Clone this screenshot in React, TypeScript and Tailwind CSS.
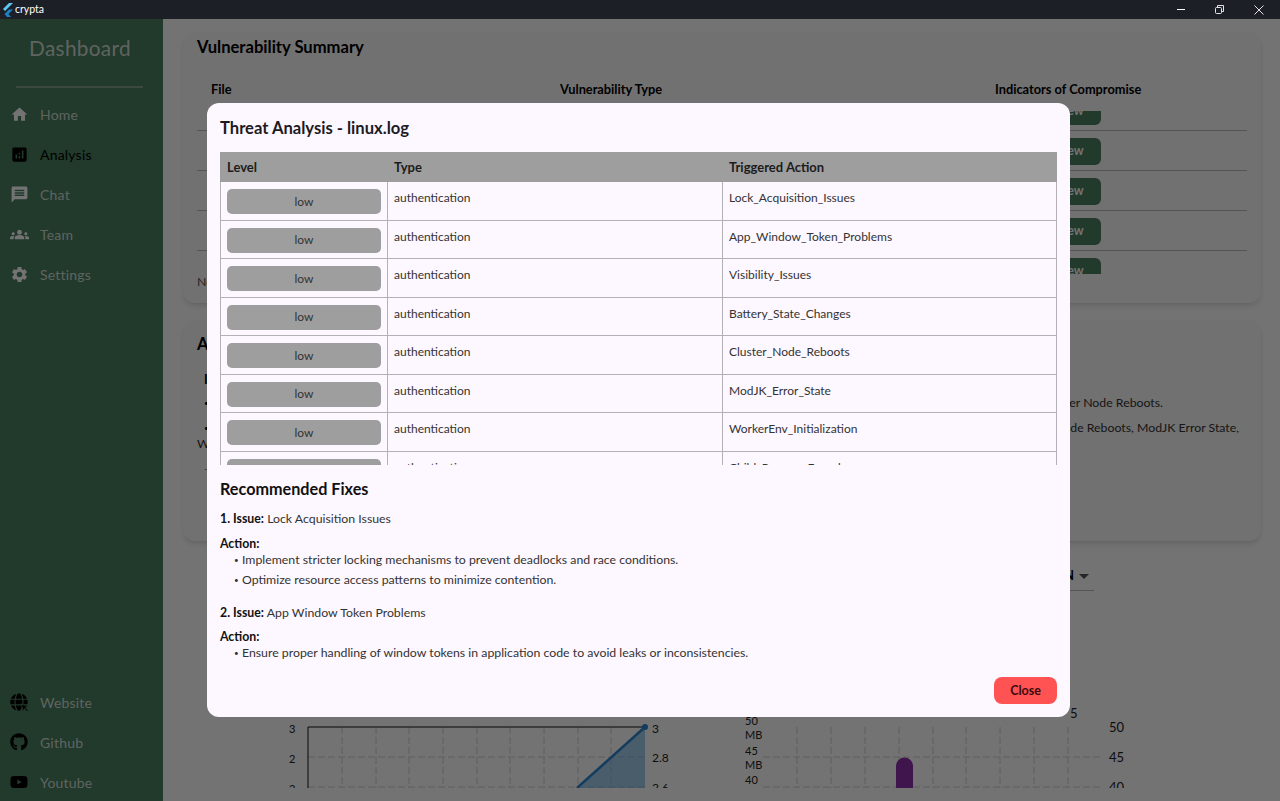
import { FaGithub, FaYoutube, FaGlobe } from 'react-icons/fa';
import { MdAnalytics, MdGroups, MdHome, MdMessage, MdSettings } from 'react-icons/md';

const font = "font-['Lato',sans-serif]";

const navItems = [
  { label: 'Home', icon: MdHome },
  { label: 'Analysis', icon: MdAnalytics, active: true },
  { label: 'Chat', icon: MdMessage },
  { label: 'Team', icon: MdGroups },
  { label: 'Settings', icon: MdSettings },
];

const threats = [
  'Lock_Acquisition_Issues',
  'App_Window_Token_Problems',
  'Visibility_Issues',
  'Battery_State_Changes',
  'Cluster_Node_Reboots',
  'ModJK_Error_State',
  'WorkerEnv_Initialization',
  'Child_Process_Found',
];

// globe with the little pointer at its lower right
function WebsiteIcon({ className }: { className?: string }) {
  return (
    <span className={`relative block ${className}`}>
      <FaGlobe className="h-full w-full text-black" />
      <svg width="9" height="9" viewBox="0 0 9 9" className="absolute -right-px -bottom-px">
        <path d="M1 1l7 2.500-2.500 1L8 7.500 7 8.500 4.500 5.500 3.500 8z" fill="#000" stroke="#4a8060" strokeWidth="0.8" />
      </svg>
    </span>
  );
}

const linkItems = [
  { label: 'Website', icon: WebsiteIcon },
  { label: 'Github', icon: FaGithub },
  { label: 'Youtube', icon: FaYoutube },
];

function TitleBar() {
  return (
    <div className="flex h-[19px] shrink-0 items-center bg-[#1c1f26] text-white">
      <svg width="13" height="14" viewBox="0 0 13 14" className="ml-px">
        <path d="M8 0h4L4 8 2 6z" fill="#5cc8f8" />
        <path d="M8 6.500h4L7.500 11l2.500 3H6L3.500 11z" fill="#1d7fc4" />
      </svg>
      <span className="ml-[1px] text-[10.5px]">crypta</span>
      <div className="ml-auto flex items-center">
        <span className="h-px w-[8px] bg-white" />
        <svg width="9" height="9" viewBox="0 0 9 9" className="ml-[30px]" fill="none" stroke="#e5e5e5">
          <rect x="0.5" y="2.5" width="6" height="6" rx="1" />
          <path d="M2.500 2V.5h6v6H7" />
        </svg>
        <svg width="10" height="10" viewBox="0 0 10 10" className="ml-[30px] mr-[16px]" stroke="#e5e5e5">
          <path d="M.5.5l9 9M9.500.5l-9 9" />
        </svg>
      </div>
    </div>
  );
}

function NavRow({ label, icon: Icon, active }: { label: string; icon: React.ComponentType<{ className?: string }>; active?: boolean }) {
  return (
    <div className={`flex h-[40px] items-center pl-[10px] ${active ? 'text-black' : 'text-[#d2ddd6]'}`}>
      <span className={`flex w-[19px] justify-center ${active ? 'text-black' : 'text-white'}`}>
        <Icon className="h-[19px] w-[19px] shrink-0" />
      </span>
      <span className="ml-[11px] text-[14px] tracking-[0.2px]">{label}</span>
    </div>
  );
}

function Sidebar() {
  return (
    <aside className="flex w-[163px] shrink-0 flex-col bg-[#4a8060]">
      <div className="pt-[13px] pr-[3px] text-center text-[20.8px] tracking-[0.3px] text-[#d2ddd6]">Dashboard</div>
      <div className="mt-[23px] mr-[20px] ml-[16px] h-[2px] bg-[#d2ddd6]/40" />
      <nav className="mt-[6px]">
        {navItems.map((item) => (
          <NavRow key={item.label} {...item} />
        ))}
      </nav>
      <div className="mt-auto mb-[-1px]">
        {linkItems.map((item) => (
          <div key={item.label} className="flex h-[40px] items-center pl-[10px] text-[#d2ddd6]">
            <item.icon className="h-[18px] w-[18px] shrink-0 text-black" />
            <span className="ml-[12px] text-[14px] tracking-[0.2px]">{item.label}</span>
          </div>
        ))}
      </div>
    </aside>
  );
}

function VulnerabilityCard() {
  return (
    <section className="h-[271px] rounded-xl bg-[#fafafa] px-[14px] shadow-md">
      <h2 className="pt-[3px] text-[16.6px] leading-[24px] font-bold text-black">Vulnerability Summary</h2>
      <div className="mt-[21px] flex pl-[14px] text-[12.8px] font-bold text-black">
        <span className="w-[349px]">File</span>
        <span className="w-[435px]">Vulnerability Type</span>
        <span>Indicators of Compromise</span>
      </div>
      <div className="mt-[12px] h-[163px] overflow-hidden">
        <div className="-mt-[20px]">
          {[0, 1, 2, 3, 4].map((i) => (
            <div key={i} className="flex h-[40px] items-center justify-end border-b border-[#bdbdbd] pr-[146px]">
              <span className="mt-[2px] flex h-[27px] w-[61px] items-center justify-center rounded-md bg-[#4a8060] pr-[2px] text-[12.3px] font-bold text-white">
                View
              </span>
            </div>
          ))}
        </div>
      </div>
      <p className="-mt-px text-[12.3px] text-[#555]">Note</p>
    </section>
  );
}

function SmallBullet() {
  return <span className="inline-block w-[8px] text-[8px] leading-none align-[1px]">•</span>;
}

function AnalysisCard() {
  return (
    <section className="mt-[17px] h-[221px] rounded-xl bg-[#fafafa] px-[14px] pt-[12px] text-[#333] shadow-md">
      <h2 className="text-[16.6px] leading-[24px] font-bold text-black">Analysis</h2>
      <p className="mt-[14px] pl-[7px] text-[12.8px] font-bold text-black">Issues</p>
      <div className="mt-[5px] flex text-[12.3px]">
        <span className="pl-[7px] text-black">
          <SmallBullet />
        </span>
        <span className="mr-[84px] ml-auto">Cluster Node Reboots.</span>
      </div>
      <div className="mt-[6px] flex text-[12.3px]">
        <span className="pl-[7px] text-black">
          <SmallBullet />
        </span>
        <span className="mr-[8px] ml-auto">Node Reboots, ModJK Error State,</span>
      </div>
      <p className="-mt-[2px] text-[12.3px]">W</p>
      <p className="mt-[7px] pl-[7px] text-[10px] text-[#777]">-</p>
    </section>
  );
}

function LineChart() {
  const xs = [342, 376, 409, 443, 477, 510, 544, 578, 611];
  return (
    <svg width="400" height="88" viewBox="280 700 400 88">
      <g stroke="#d0d0d0" strokeDasharray="7 3">
        {xs.map((x) => (
          <line key={x} x1={x} x2={x} y1="727" y2="788" />
        ))}
        <line x1="308" x2="645" y1="757" y2="757" />
        <line x1="308" x2="645" y1="787" y2="787" />
      </g>
      <path d="M308 788V727H645" fill="none" stroke="#111" />
      <path d="M577 788L645 727V788Z" fill="#5aa6e0" fillOpacity="0.55" />
      <path d="M577 788L645 727" fill="none" stroke="#2a86d0" strokeWidth="2.5" />
      <circle cx="645" cy="727" r="3" fill="#2a86d0" />
      <g fontSize="11" fill="#222" fontFamily="Lato, sans-serif">
        <text x="289" y="733">3</text>
        <text x="289" y="763">2</text>
        <text x="289" y="793">2</text>
        <text x="652" y="733" fontSize="12">3</text>
        <text x="652" y="762" fontSize="12">2.8</text>
        <text x="652" y="792" fontSize="12">2.6</text>
      </g>
    </svg>
  );
}

function BarChart() {
  const xs = [797, 831, 865, 899, 933, 966, 1000, 1034, 1068];
  return (
    <svg width="400" height="88" viewBox="740 700 400 88">
      <g stroke="#d0d0d0" strokeDasharray="7 3">
        {xs.map((x) => (
          <line key={x} x1={x} x2={x} y1="727" y2="788" />
        ))}
        <line x1="763" x2="1103" y1="757" y2="757" />
        <line x1="763" x2="1103" y1="787" y2="787" />
      </g>
      <path d="M896 788V766a8.500 8.500 0 0 1 17 0V788Z" fill="#8e30ae" />
      <g fontSize="11" fill="#222" fontFamily="Lato, sans-serif">
        <text x="745" y="725">50</text>
        <text x="745" y="739">MB</text>
        <text x="745" y="755">45</text>
        <text x="745" y="769">MB</text>
        <text x="745" y="784">40</text>
        <text x="1070" y="718" fontSize="13">5</text>
        <text x="1109" y="732" fontSize="13">50</text>
        <text x="1109" y="762" fontSize="13">45</text>
        <text x="1109" y="792" fontSize="13">40</text>
      </g>
    </svg>
  );
}

function MainContent() {
  return (
    <main className="h-[769px] flex-1 overflow-hidden bg-[#ffffff] pt-[13px] pr-[19px] pl-[20px]">
      <VulnerabilityCard />
      <AnalysisCard />
      <div className="mt-[21px] flex justify-end pr-[167px]">
        <div className="flex h-[29px] w-[60px] items-center justify-end border-b border-[#bdbdbd] text-[13px] font-bold text-black">
          <span>N</span>
          <span className="mx-[5px] h-0 w-0 border-x-[5px] border-t-[5px] border-x-transparent border-t-[#555]" />
        </div>
      </div>
      <div className="mt-[109px] flex">
        <div className="ml-[97px]">
          <LineChart />
        </div>
        <div className="ml-[60px]">
          <BarChart />
        </div>
      </div>
    </main>
  );
}

function ThreatTable() {
  return (
    <div className="mt-[12px] h-[313px] overflow-hidden">
      <div className="grid h-[30px] grid-cols-[167px_335px_335px] items-center bg-[#9e9e9e] pt-[1px] text-[13px] font-bold text-[#1c1c1c]">
        <span className="pl-[7px]">Level</span>
        <span className="pl-[7px]">Type</span>
        <span className="pl-[7px]">Triggered Action</span>
      </div>
      {threats.map((action) => (
        <div
          key={action}
          className="grid h-[38.5px] grid-cols-[167px_335px_335px] border-x border-b border-[#b4b0b8] text-[12px] text-[#333]"
        >
          <div className="border-r border-[#b4b0b8] px-[6px] pt-[7px]">
            <div className="flex h-[25px] items-center justify-center rounded-[5px] bg-[#9e9e9e] text-[#333]">low</div>
          </div>
          <div className="border-r border-[#b4b0b8] pt-[7px] pl-[6px]">authentication</div>
          <div className="pt-[7px] pl-[6px]">{action}</div>
        </div>
      ))}
    </div>
  );
}

function Fixes() {
  return (
    <div className="text-[12.3px] text-[#333]">
      <h3 className="mt-[12px] text-[16.2px] leading-[24px] font-bold text-[#111]">Recommended Fixes</h3>
      <p className="mt-[9px] leading-[18px]">
        <b className="font-bold text-[#111]">1. Issue:</b> Lock Acquisition Issues
      </p>
      <p className="mt-[7px] leading-[18px] font-bold text-[#111]">Action:</p>
      <p className="-mt-[3px] pl-[14px] leading-[20px]">
        <SmallBullet />
        Implement stricter locking mechanisms to prevent deadlocks and race conditions.
      </p>
      <p className="pl-[14px] leading-[20px]">
        <SmallBullet />
        Optimize resource access patterns to minimize contention.
      </p>
      <p className="mt-[14px] leading-[18px]">
        <b className="font-bold text-[#111]">2. Issue:</b> App Window Token Problems
      </p>
      <p className="mt-[6px] leading-[18px] font-bold text-[#111]">Action:</p>
      <p className="-mt-[3px] pl-[14px] leading-[20px]">
        <SmallBullet />
        Ensure proper handling of window tokens in application code to avoid leaks or inconsistencies.
      </p>
    </div>
  );
}

export default function App() {
  return (
    <div className={`flex h-[801px] w-[1280px] flex-col overflow-hidden bg-[#fff] ${font}`}>
      <TitleBar />
      <div className="relative flex flex-1">
        <Sidebar />
        <MainContent />
        <div className="absolute inset-0 bg-black/55" />
        <div className="absolute top-[84px] left-[207px] flex h-[614px] w-[863px] flex-col rounded-xl bg-[#fdf7ff] px-[13px]">
          <h2 className="pt-[13px] text-[16.6px] leading-[24px] font-bold text-[#1c1b1f]">Threat Analysis - linux.log</h2>
          <ThreatTable />
          <Fixes />
          <div className="mt-auto mb-[13px] flex justify-end">
            <span className="flex h-[27px] w-[63px] items-center justify-center rounded-lg bg-[#ff5252] pt-[2px] text-[12.5px] font-bold text-[#3a0a0e]">
              Close
            </span>
          </div>
        </div>
      </div>
    </div>
  );
}
